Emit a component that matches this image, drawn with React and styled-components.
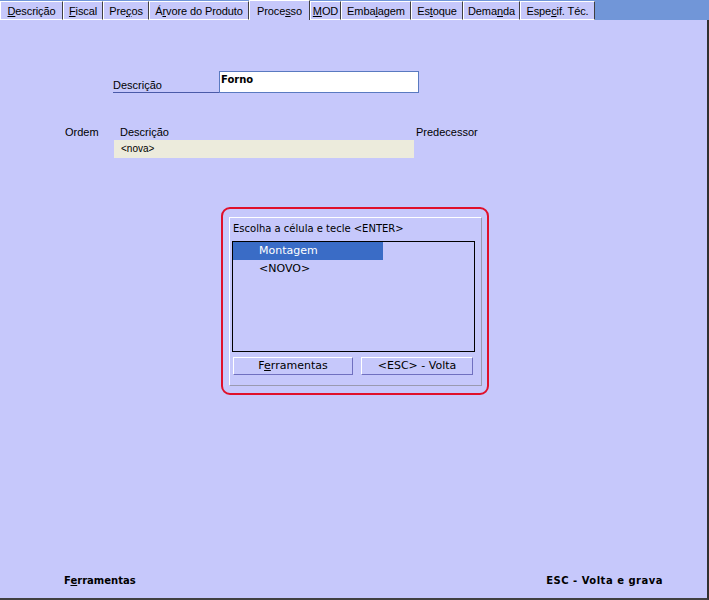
import React from 'react'
import styled, { createGlobalStyle } from 'styled-components'

const Global = createGlobalStyle`
  html, body { margin: 0; padding: 0; background: #c6c8fb; }
  #root { width: 709px; height: 600px; }
`

const tabs = [
  { pre: '', key: 'D', post: 'escrição', w: 63 },
  { pre: '', key: 'F', post: 'iscal', w: 40 },
  { pre: 'Pre', key: 'ç', post: 'os', w: 46 },
  { pre: 'Á', key: 'r', post: 'vore do Produto', w: 100 },
  { pre: 'Proce', key: 's', post: 'so', w: 61, active: true },
  { pre: '', key: 'M', post: 'OD', w: 31 },
  { pre: 'Emba', key: 'l', post: 'agem', w: 70 },
  { pre: 'Es', key: 't', post: 'oque', w: 52 },
  { pre: 'Dema', key: 'n', post: 'da', w: 57 },
  { pre: 'Espe', key: 'c', post: 'if. Téc.', w: 75 },
]

const App = () => (
  <>
    <Global />
    <Window>
      <TabBar>
        {tabs.map(t => (
          <Tab key={t.pre + t.key} w={t.w} active={t.active}>
            {t.pre}<u>{t.key}</u>{t.post}
          </Tab>
        ))}
      </TabBar>
      <Panel>
        <DescRow>
          <DescLabel>Descrição</DescLabel>
          <DescInput>Forno</DescInput>
        </DescRow>
        <GridHead>
          <HeadCell w={55}>Ordem</HeadCell>
          <HeadCell w={296}>Descrição</HeadCell>
          <HeadCell>Predecessor</HeadCell>
        </GridHead>
        <GridRow>&lt;nova&gt;</GridRow>
        <DialogWrap>
          <Dialog>
            <DialogTitle>Escolha a célula e tecle &lt;ENTER&gt;</DialogTitle>
            <ListBox>
              <ListItem selected>Montagem</ListItem>
              <ListItem>&lt;NOVO&gt;</ListItem>
            </ListBox>
            <ButtonRow>
              <Button w={120}>F<u>e</u>rramentas</Button>
              <Button w={112}>&lt;ESC&gt; - Volta</Button>
            </ButtonRow>
          </Dialog>
        </DialogWrap>
        <Footer>
          <FooterText>F<u>e</u>rramentas</FooterText>
          <FooterText spacing={0.5}>ESC - Volta e grava</FooterText>
        </Footer>
      </Panel>
    </Window>
  </>
)

export default App

const Window = styled.div`
  width: 709px;
  height: 600px;
  display: flex;
  flex-direction: column;
  font-family: "Liberation Sans", Arial, sans-serif;
  font-size: 11px;
  color: #000;
  background: #7196d8;
`
const TabBar = styled.div`
  display: flex;
  height: 20px;
  align-items: flex-end;
`
const Tab = styled.div`
  box-sizing: border-box;
  width: ${p => p.w}px;
  height: ${p => (p.active ? 20 : 19)}px;
  display: flex;
  justify-content: center;
  padding-top: ${p => (p.active ? 4 : 3)}px;
  background: #c6c8fb;
  border-left: 1px solid #ffffff;
  border-right: 1px solid #404040;
  border-top: 1px solid #ffffff;
  border-bottom: ${p => (p.active ? 'none' : '1px solid #ffffff')};
  white-space: nowrap;
  letter-spacing: -0.1px;
  u { text-decoration-thickness: 1px; text-underline-offset: 1px; }
`
const Panel = styled.div`
  flex: 1;
  display: flex;
  flex-direction: column;
  background: #c6c8fb;
  border-right: 2px solid #303030;
  border-bottom: 2px solid #404040;
`
const DescRow = styled.div`
  display: flex;
  align-items: flex-end;
  margin-top: 51px;
  padding-left: 113px;
`
const DescLabel = styled.div`
  box-sizing: border-box;
  width: 106px;
  padding-bottom: 1px;
  border-bottom: 1px solid #4a5aa8;
`
const DescInput = styled.div`
  box-sizing: border-box;
  width: 200px;
  height: 22px;
  padding: 2px 1px 0;
  background: #fff;
  border: 1px solid #5a7ac0;
  font-family: "DejaVu Sans", sans-serif;
  font-weight: bold;
  font-size: 10px;
`
const GridHead = styled.div`
  display: flex;
  margin-top: 33px;
  padding-left: 65px;
  height: 14px;
`
const HeadCell = styled.div`
  width: ${p => (p.w ? `${p.w}px` : 'auto')};
`
const GridRow = styled.div`
  box-sizing: border-box;
  width: 300px;
  height: 18px;
  margin-left: 114px;
  padding: 3px 0 0 7px;
  background: #ecebdc;
  font-size: 10px;
`
const DialogWrap = styled.div`
  box-sizing: border-box;
  width: 268px;
  height: 188px;
  margin: 49px 0 0 221px;
  padding: 8px 5px 7px 6px;
  border: 2px solid #e0102a;
  border-radius: 9px;
`
const Dialog = styled.div`
  box-sizing: border-box;
  height: 100%;
  display: flex;
  flex-direction: column;
  padding: 5px 5px 0 2px;
  border-top: 1px solid #ffffff;
  border-left: 1px solid #ffffff;
  border-right: 1px solid #9a9ab0;
  border-bottom: 1px solid #9a9ab0;
  font-family: "DejaVu Sans", sans-serif;
  font-size: 10px;
`
const DialogTitle = styled.div`
  height: 18px;
  padding-left: 1px;
`
const ListBox = styled.div`
  box-sizing: border-box;
  width: 243px;
  height: 111px;
  border: 1px solid #000;
`
const ListItem = styled.div`
  width: 150px;
  height: 18px;
  line-height: 18px;
  padding-left: 26px;
  box-sizing: border-box;
  font-size: 11px;
  background: ${p => (p.selected ? '#3a6cc6' : 'transparent')};
  color: ${p => (p.selected ? '#fff' : '#000')};
`
const ButtonRow = styled.div`
  display: flex;
  gap: 8px;
  margin-top: 5px;
  padding-left: 1px;
`
const Button = styled.div`
  box-sizing: border-box;
  width: ${p => p.w}px;
  height: 18px;
  line-height: 16px;
  text-align: center;
  font-size: 11px;
  border-top: 1px solid #ffffff;
  border-left: 1px solid #ffffff;
  border-right: 1px solid #7070c0;
  border-bottom: 1px solid #7070c0;
`
const Footer = styled.div`
  margin-top: auto;
  display: flex;
  justify-content: space-between;
  padding: 0 44px 12px 64px;
`
const FooterText = styled.div`
  font-family: "DejaVu Sans", sans-serif;
  font-weight: bold;
  font-size: 10px;
  letter-spacing: ${p => p.spacing || 0}px;
`
